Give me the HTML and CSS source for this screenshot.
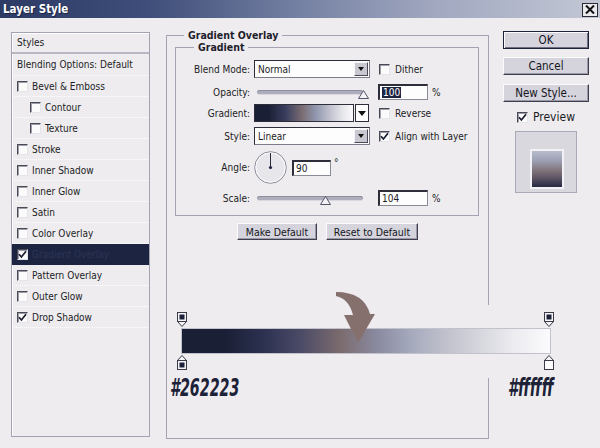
FILE: index.html
```html
<!DOCTYPE html>
<html>
<head>
<meta charset="utf-8">
<title>Layer Style</title>
<link rel="stylesheet" href="styles.css">
</head>
<body>
<div class="dialog">
  <div class="titlebar">
    <span class="title">Layer Style</span>
    <span class="close"><svg width="10" height="9" viewBox="0 0 10 9"><path d="M1 0.5 L9 8.5 M9 0.5 L1 8.5" stroke="#111" stroke-width="2"/></svg></span>
  </div>
  <div class="content">
    <div class="styles-panel">
      <div class="sp-row head first">Styles</div>
      <div class="sp-row head blend">Blending Options: Default</div>
      <div class="sp-row"><span class="cb"></span>Bevel &amp; Emboss</div>
      <div class="sp-row sub"><span class="cb"></span>Contour</div>
      <div class="sp-row sub"><span class="cb"></span>Texture</div>
      <div class="sp-row"><span class="cb"></span>Stroke</div>
      <div class="sp-row"><span class="cb"></span>Inner Shadow</div>
      <div class="sp-row"><span class="cb"></span>Inner Glow</div>
      <div class="sp-row"><span class="cb"></span>Satin</div>
      <div class="sp-row"><span class="cb"></span>Color Overlay</div>
      <div class="sp-row sel"><span class="cb"><svg width="9" height="9" viewBox="0 0 9 9"><path d="M1 4.2 L3.4 7 L8 1.2" stroke="#1a1d30" stroke-width="1.7" fill="none"/></svg></span>Gradient Overlay</div>
      <div class="sp-row"><span class="cb"></span>Pattern Overlay</div>
      <div class="sp-row"><span class="cb"></span>Outer Glow</div>
      <div class="sp-row"><span class="cb"><svg width="9" height="9" viewBox="0 0 9 9"><path d="M1 4.2 L3.4 7 L8 1.2" stroke="#1a1d30" stroke-width="1.7" fill="none"/></svg></span>Drop Shadow</div>
    </div>

    <div class="main-group">
      <div class="legend main-legend">Gradient Overlay</div>
      <div class="inner-group">
        <div class="legend inner-legend">Gradient</div>

        <div class="row r1">
          <span class="lbl">Blend Mode:</span>
          <div class="select"><span class="sel-text">Normal</span><span class="dd"></span></div>
          <label class="chk"><span class="cb"></span>Dither</label>
        </div>

        <div class="row r2">
          <span class="lbl">Opacity:</span>
          <div class="slider"><span class="track"></span><svg class="thumb" style="left:104px" width="11" height="9" viewBox="0 0 11 9"><polygon points="5.5,0.5 10.5,8.5 0.5,8.5" fill="#f3f3f6" stroke="#55556a"/></svg></div>
          <div class="num"><span class="hl">100</span></div>
          <span class="unit">%</span>
        </div>

        <div class="row r3">
          <span class="lbl">Gradient:</span>
          <div class="grad-swatch"></div>
          <div class="grad-dd"><span class="tri"></span></div>
          <label class="chk chk-rev"><span class="cb"></span>Reverse</label>
        </div>

        <div class="row r4">
          <span class="lbl">Style:</span>
          <div class="select"><span class="sel-text">Linear</span><span class="dd"></span></div>
          <label class="chk"><span class="cb"><svg width="9" height="9" viewBox="0 0 9 9"><path d="M1 4.2 L3.4 7 L8 1.2" stroke="#1a1d30" stroke-width="1.7" fill="none"/></svg></span>Align with Layer</label>
        </div>

        <div class="row r5">
          <span class="lbl">Angle:</span>
          <svg class="dial" width="33" height="33" viewBox="0 0 33 33">
            <circle cx="16.5" cy="16.5" r="15.8" fill="#e7e6eb" stroke="#8e8e9c" stroke-width="1"/>
            <circle cx="16.5" cy="16.5" r="14.6" fill="none" stroke="#fbfbfd" stroke-width="1"/>
            <line x1="16.5" y1="16.5" x2="16.5" y2="2" stroke="#2a2a38" stroke-width="1"/>
            <circle cx="16.5" cy="16.5" r="1.6" fill="#1e2340"/>
          </svg>
          <div class="num num-angle">90</div>
          <span class="deg">°</span>
        </div>

        <div class="row r6">
          <span class="lbl">Scale:</span>
          <div class="slider"><span class="track"></span><svg class="thumb" style="left:66px" width="11" height="9" viewBox="0 0 11 9"><polygon points="5.5,0.5 10.5,8.5 0.5,8.5" fill="#f3f3f6" stroke="#55556a"/></svg></div>
          <div class="num">104</div>
          <span class="unit">%</span>
        </div>
      </div>
      <div class="btn-row">
        <span class="btn btn-make">Make Default</span>
        <span class="btn btn-reset">Reset to Default</span>
      </div>
    </div>

    <div class="side">
      <span class="btn side-btn ok">OK</span>
      <span class="btn side-btn cancel">Cancel</span>
      <span class="btn side-btn newstyle">New Style...</span>
      <label class="preview-row"><span class="cb"><svg width="9" height="9" viewBox="0 0 9 9"><path d="M1 4.2 L3.4 7 L8 1.2" stroke="#1a1d30" stroke-width="1.7" fill="none"/></svg></span>Preview</label>
      <div class="preview-box"><div class="preview-swatch"></div></div>
    </div>
  </div>
</div>

<div class="annot">
  <div class="stops">
    <svg width="12" height="15" viewBox="0 0 12 15"><rect x="1.5" y="0.5" width="9" height="9" fill="#f4f4f6" stroke="#3a3a48"/><rect x="3.5" y="2.5" width="5" height="5" fill="#1c2038"/><polygon points="1.5,9.5 10.5,9.5 6,14.5" fill="#f4f4f6" stroke="#3a3a48"/></svg>
    <svg width="12" height="15" viewBox="0 0 12 15"><rect x="1.5" y="0.5" width="9" height="9" fill="#f4f4f6" stroke="#3a3a48"/><rect x="3.5" y="2.5" width="5" height="5" fill="#1c2038"/><polygon points="1.5,9.5 10.5,9.5 6,14.5" fill="#f4f4f6" stroke="#3a3a48"/></svg>
  </div>
  <div class="bar"></div>
  <div class="stops bottom">
    <svg width="12" height="15" viewBox="0 0 12 15"><polygon points="6,0.5 10.5,5.5 1.5,5.5" fill="#f4f4f6" stroke="#3a3a48"/><rect x="1.5" y="5.5" width="9" height="9" fill="#f4f4f6" stroke="#3a3a48"/><rect x="3.5" y="7.5" width="5" height="5" fill="#1c2038"/></svg>
    <svg width="12" height="15" viewBox="0 0 12 15"><polygon points="6,0.5 10.5,5.5 1.5,5.5" fill="#f4f4f6" stroke="#3a3a48"/><rect x="1.5" y="5.5" width="9" height="9" fill="#fdfdfe" stroke="#3a3a48"/></svg>
  </div>
</div>

<svg class="arrow" width="50" height="60" viewBox="0 0 50 60">
  <path d="M6 4 Q34 4 40 26 L45 26 L28 55 L14 27 L23 27 Q19 11 6 8 Z" fill="#86706e"/>
</svg>

<div class="hex hex-left">#262223</div>
<div class="hex hex-right">#ffffff</div>
</body>
</html>
```

FILE: styles.css
```css
* { box-sizing: border-box; }

body {
  margin: 0;
  width: 600px;
  height: 448px;
  overflow: hidden;
  position: relative;
  background: #eeecef;
  font-family: "DejaVu Sans Condensed", "DejaVu Sans", "Liberation Sans", sans-serif;
  font-stretch: condensed;
  font-size: 10px;
  color: #1c1c24;
}

.dialog { width: 600px; height: 448px; }

.titlebar {
  height: 18px;
  display: flex;
  align-items: center;
  justify-content: space-between;
  padding: 0 2px 0 3px;
  background: linear-gradient(to right, #2c3a64 0%, #3f4e7a 25%, #7581a3 50%, #a0a7bf 72%, #c3c7d5 100%);
}

.title {
  color: #fff;
  font-weight: bold;
  font-size: 11.5px;
  text-shadow: 1px 1px 0 #1b2344;
}

.close {
  width: 16px;
  height: 14px;
  border: 1px solid #2a2a34;
  background: #e9e9ee;
  display: flex;
  align-items: center;
  justify-content: center;
  margin-top: 1px;
}

.content { display: flex; align-items: flex-start; }

/* left styles list */
.styles-panel {
  margin: 14px 0 0 11px;
  width: 139px;
  height: 405px;
  border: 1px solid #a2a2b2;
  box-shadow: inset 1px 1px 0 #ffffff;
  display: flex;
  flex-direction: column;
}

.sp-row {
  height: 21px;
  flex: none;
  display: flex;
  align-items: center;
  padding-left: 5px;
  border-bottom: 1px dotted #ffffff;
  white-space: nowrap;
}
.sp-row.head { padding-left: 5px; }
.sp-row.first {
  height: 21px;
  border-bottom: 2px solid #b8b7c3;
}
.sp-row.blend { height: 22px; }
.sp-row.sub { padding-left: 18px; }
.sp-row .cb { margin-right: 4px; }
.sp-row.sel {
  background: #1c2442;
  color: #2b3556;
  border-bottom-color: #1c2442;
}

.cb {
  width: 11px;
  height: 11px;
  flex: none;
  background: #fbfbfc;
  border-top: 1px solid #4a4a56;
  border-left: 1px solid #4a4a56;
  border-right: 1px solid #e4e4ea;
  border-bottom: 1px solid #e4e4ea;
  box-shadow: inset 1px 1px 0 #9d9daa;
  display: flex;
  align-items: center;
  justify-content: center;
}
.cb svg { display: block; }

/* main group */
.main-group {
  margin: 17px 0 0 16px;
  width: 323px;
  height: 404px;
  border: 1px solid #a3a3b3;
}

.legend {
  width: fit-content;
  margin-top: -7px;
  padding: 0 4px;
  background: #eeecef;
  font-weight: bold;
  font-size: 10.5px;
  line-height: 13px;
  color: #1e1e2a;
}
.main-legend { margin-left: 17px; }

.inner-group {
  margin: 5px 0 0 8px;
  width: 304px;
  height: 169px;
  border: 1px solid #a3a3b3;
}
.inner-legend { margin-left: 18px; }

.row { display: flex; align-items: center; }
.r1 { margin-top: 6px; height: 18px; }
.r2 { margin-top: 6px; height: 16px; }
.r3 { margin-top: 4px; height: 18px; }
.r4 { margin-top: 5px; height: 18px; }
.r5 { margin-top: 6px; height: 33px; }
.r6 { margin-top: 6px; height: 16px; }

.lbl {
  width: 74px;
  margin-right: 4px;
  text-align: right;
  white-space: nowrap;
}

.select {
  width: 116px;
  height: 18px;
  background: #fdfdfe;
  border: 1px solid #7c7c8a;
  border-top-color: #2e2e3a;
  border-left-color: #2e2e3a;
  display: flex;
  align-items: center;
  justify-content: space-between;
  padding: 0 1px 0 3px;
}
.dd {
  width: 14px;
  height: 14px;
  background: #c9c8d1;
  border: 1px solid;
  border-color: #f6f6f8 #4a4a58 #4a4a58 #f6f6f8;
  display: flex;
  align-items: center;
  justify-content: center;
}
.dd::after {
  content: "";
  border-left: 3.5px solid transparent;
  border-right: 3.5px solid transparent;
  border-top: 4px solid #111;
}

.chk {
  margin-left: 9px;
  display: flex;
  align-items: center;
  gap: 5px;
  white-space: nowrap;
}
.chk-rev { margin-left: 10px; }

.slider {
  width: 116px;
  height: 16px;
  position: relative;
  display: flex;
  align-items: center;
}
.track {
  margin-left: 3px;
  width: 106px;
  height: 5px;
  border-radius: 3px;
  background: #aeadbc;
  border-bottom: 1px solid #d8d8e0;
  box-shadow: inset 0 1px 0 #8e8e9e;
}
.thumb { position: absolute; top: 6px; }

.num {
  margin-left: 8px;
  width: 50px;
  height: 16px;
  background: #fdfdfe;
  border: 1px solid #8a8a98;
  border-top: 2px solid #2e2e3a;
  border-left: 2px solid #2e2e3a;
  padding-left: 2px;
  display: flex;
  align-items: center;
  font-size: 10px;
}
.hl { background: #1c2442; color: #fff; padding: 0 1px; }
.num-angle { margin-left: 5px; width: 39px; }
.unit { margin-left: 4px; }
.deg { margin-left: 3px; align-self: flex-start; margin-top: 6px; }

.grad-swatch {
  width: 100px;
  height: 18px;
  border: 1px solid #2e2e3a;
  background: linear-gradient(to right, #1b1f36 0%, #1b1f36 14%, #3c4060 32%, #7a6c72 48%, #9097ae 62%, #bfc0cc 76%, #e2e2e8 88%, #fbfbfd 100%);
}
.grad-dd {
  margin-left: 1px;
  width: 14px;
  height: 18px;
  background: #fdfdfe;
  border: 1px solid #2e2e3a;
  display: flex;
  align-items: center;
  justify-content: center;
}
.tri {
  border-left: 4.5px solid transparent;
  border-right: 4.5px solid transparent;
  border-top: 5px solid #111;
}

.dial { margin-left: 0; flex: none; }

/* buttons */
.btn {
  display: flex;
  align-items: center;
  justify-content: center;
  background: #d5d4dc;
  border: 1px solid;
  border-color: #fbfbfd #3e3e4e #3e3e4e #fbfbfd;
  box-shadow: inset -1px -1px 0 #9a9aa8;
  white-space: nowrap;
  color: #15151e;
}

.btn-row {
  margin-top: 7px;
  padding-left: 70px;
  display: flex;
  gap: 9px;
}
.btn-make { width: 80px; height: 17px; font-size: 10.5px; }
.btn-reset { width: 92px; height: 17px; font-size: 10.5px; }

.side {
  margin: 13px 0 0 14px;
  width: 86px;
  display: flex;
  flex-direction: column;
}
.side-btn { width: 86px; height: 18px; font-size: 11.5px; }
.ok {
  border: 1px solid #1e2238;
  box-shadow: inset 1px 1px 0 #fbfbfd, inset -1px -1px 0 #6e6e7e;
}
.cancel { margin-top: 8px; }
.newstyle { margin-top: 9px; }

.preview-row {
  margin-top: 8px;
  height: 14px;
  padding-left: 14px;
  display: flex;
  align-items: center;
  gap: 5px;
  font-size: 12px;
}
.preview-box {
  margin: 7px 0 0 12px;
  width: 62px;
  height: 62px;
  background: #d9d8df;
  border: 1px solid #a9a9b8;
  padding-top: 17px;
}
.preview-swatch {
  margin-left: 14px;
  width: 34px;
  height: 40px;
  border: 2px solid #f2f2f6;
  background: linear-gradient(to bottom, #b9bccb 0%, #9ea2b6 25%, #80737a 55%, #5c5464 75%, #262a44 100%);
}

/* annotation overlay */
.annot {
  position: absolute;
  left: 170px;
  top: 305px;
  width: 392px;
  height: 73px;
  background: #eeecef;
  padding: 7px 0 0 6px;
}
.stops {
  width: 379px;
  height: 15px;
  display: flex;
  justify-content: space-between;
}
.stops svg { display: block; }
.bar {
  margin: 1px 0 0 5px;
  width: 370px;
  height: 26px;
  border: 1px solid #c2c2cc;
  background: linear-gradient(to right, #1b1f36 0%, #1b1f36 12%, #2c3150 22%, #4a4a66 32%, #7b6b6e 43%, #8a8aa0 53%, #a4a9bc 62%, #bcbdc9 70%, #d4d4dc 80%, #ebebf0 90%, #fbfbfd 100%);
}
.stops.bottom { margin-top: 1px; }

.arrow { position: absolute; left: 330px; top: 288px; }

.hex {
  position: absolute;
  top: 376px;
  font-family: "DejaVu Sans Condensed", "DejaVu Sans", sans-serif;
  font-style: italic;
  font-weight: bold;
  font-size: 24px;
  line-height: 24px;
  color: #1d2238;
  transform: scaleX(0.66);
  transform-origin: left top;
  white-space: nowrap;
}
.hex-left { left: 170px; }
.hex-right { left: 508px; }
```
